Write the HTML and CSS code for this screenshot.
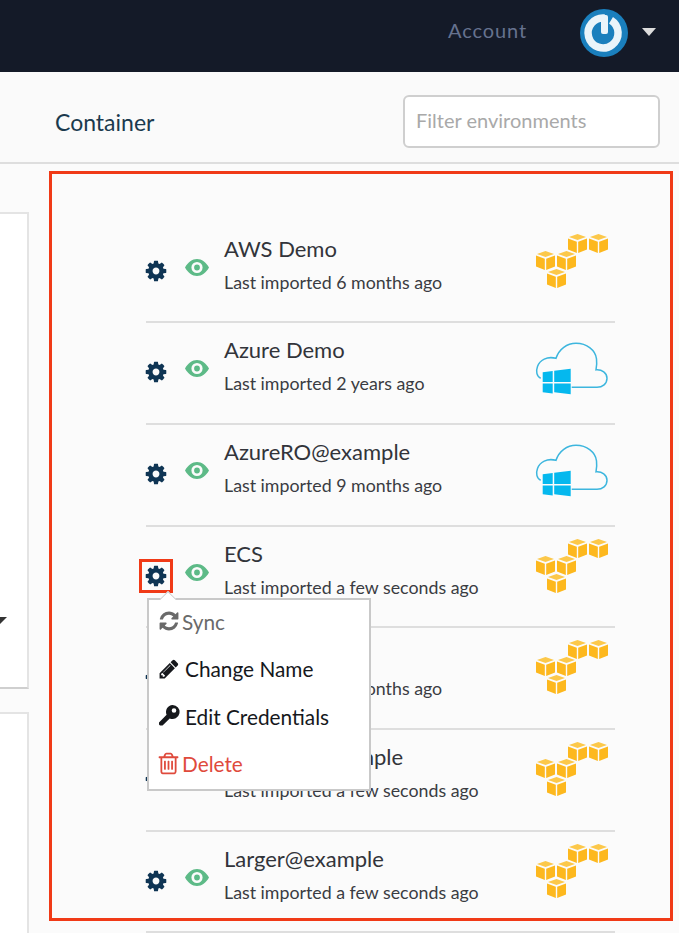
FILE: index.html
```html
<!DOCTYPE html>
<html lang="en">
<head>
<meta charset="utf-8">
<title>Environments</title>
<link rel="stylesheet" href="styles.css">
</head>
<body>
<svg class="defs" width="0" height="0" aria-hidden="true">
  <symbol id="cog" viewBox="0 0 1792 1792"><path d="M1152 896q0-106-75-181t-181-75-181 75-75 181 75 181 181 75 181-75 75-181zm512-109v222q0 12-8 23t-20 13l-185 28q-19 54-39 91 35 50 107 138 10 12 10 25t-9 23q-27 37-99 108t-94 71q-12 0-26-9l-138-108q-44 23-91 38-16 136-29 186-7 28-36 28h-222q-14 0-24.500-8.500t-11.500-21.500l-28-184q-49-16-90-37l-141 107q-10 9-25 9-14 0-25-11-126-114-165-168-7-10-7-23 0-12 8-23 15-21 51-66.500t54-70.500q-27-50-41-99l-183-27q-13-2-21-12.500t-8-23.500v-222q0-12 8-23t19-13l186-28q14-46 39-92-40-57-107-138-10-12-10-24 0-10 9-23 26-36 98.500-107.500t94.500-71.500q13 0 26 10l138 107q44-23 91-38 16-136 29-186 7-28 36-28h222q14 0 24.500 8.500t11.500 21.500l28 184q49 16 90 37l142-107q9-9 24-9 13 0 25 10 129 119 165 170 7 8 7 22 0 12-8 23-15 21-51 66.500t-54 70.500q26 50 41 98l183 28q13 2 21 12.500t8 23.500z"/></symbol>
  <symbol id="eye" viewBox="0 0 24 17"><path fill-rule="evenodd" d="M0 8.500C3 3.200 7.200 0 12 0s9 3.200 12 8.500C21 13.800 16.800 17 12 17S3 13.800 0 8.500zM12 2.900a5.600 5.600 0 1 0 0 11.200 5.600 5.600 0 0 0 0-11.200zM12 5.600a2.900 2.900 0 1 1 0 5.800 2.900 2.900 0 0 1 0-5.800z"/></symbol>
  <symbol id="cube" viewBox="0 0 19 19">
    <polygon points="9.500,0 18,3 9.500,6 1,3" fill="#fcc84a"/>
    <polygon points="0,4.500 8.800,7.700 8.800,19 0,15.500" fill="#fdb81e"/>
    <polygon points="19,4.500 10.200,7.700 10.200,19 19,15.500" fill="#fdb81e"/>
  </symbol>
  <symbol id="aws" viewBox="0 0 74 56">
    <use href="#cube" x="33" y="0" width="19" height="19"/>
    <use href="#cube" x="54" y="0" width="19" height="19"/>
    <use href="#cube" x="1" y="17" width="19" height="19"/>
    <use href="#cube" x="22" y="17" width="19" height="19"/>
    <use href="#cube" x="12" y="35" width="19" height="19"/>
  </symbol>
  <symbol id="azure" viewBox="0 0 74 56">
    <path d="M5.700 38.300C1.500 36.500 .8 31 2.500 26.500 4.800 20 12 16 21 18.300 24 9 32 3.300 41 3.300c11 0 19.500 7 20.500 15.500.4 3 .2 7-.5 11 6-.5 11 3 11 8.500 0 5.500-4.500 9-10 9H36.700" fill="none" stroke="#3db6de" stroke-width="1.500"/>
    <path d="M7.700 32.300l10-1.300v11H7.700zM19.200 30.800l16.500-2.100v13.300H19.200zM7.700 43.500h10v10l-10-1.200zM19.200 43.500h16.500v10.800l-16.500-2z" fill="#05b8ee"/>
  </symbol>
</svg>

<header class="topbar">
  <a class="account">Account</a>
  <span class="avatar">
    <svg viewBox="0 0 48 48" width="48" height="48" aria-hidden="true">
      <circle cx="24" cy="24" r="24" fill="#1a7fbd"/>
      <path d="M31 11.200A15 15 0 1 1 24.500 9" fill="none" stroke="#eaf4fa" stroke-width="7.500"/>
      <rect x="21" y="6" width="7" height="19" rx="2" fill="#eaf4fa"/>
    </svg>
  </span>
  <span class="caret"></span>
</header>

<section class="toolbar">
  <h2 class="tab">Container</h2>
  <input class="filter" type="text" placeholder="Filter environments">
</section>

<div class="content">
  <aside class="sidebar">
    <div class="card card-tall"><span class="card-caret"></span></div>
    <div class="card card-low"></div>
  </aside>

  <main class="main">
    <ul class="envs">
      <li class="env">
        <span class="gear-wrap"><svg class="gear"><use href="#cog"/></svg></span>
        <svg class="eye"><use href="#eye"/></svg>
        <div class="env-text"><div class="env-name">AWS Demo</div><div class="env-sub">Last imported 6 months ago</div></div>
        <svg class="provider"><use href="#aws"/></svg>
      </li>
      <li class="env">
        <span class="gear-wrap"><svg class="gear"><use href="#cog"/></svg></span>
        <svg class="eye"><use href="#eye"/></svg>
        <div class="env-text"><div class="env-name">Azure Demo</div><div class="env-sub">Last imported 2 years ago</div></div>
        <svg class="provider provider-azure"><use href="#azure"/></svg>
      </li>
      <li class="env">
        <span class="gear-wrap"><svg class="gear"><use href="#cog"/></svg></span>
        <svg class="eye"><use href="#eye"/></svg>
        <div class="env-text"><div class="env-name">AzureRO@example</div><div class="env-sub">Last imported 9 months ago</div></div>
        <svg class="provider provider-azure"><use href="#azure"/></svg>
      </li>
      <li class="env">
        <span class="gear-wrap gear-active"><svg class="gear"><use href="#cog"/></svg></span>
        <svg class="eye"><use href="#eye"/></svg>
        <div class="env-text"><div class="env-name">ECS</div><div class="env-sub">Last imported a few seconds ago</div></div>
        <svg class="provider"><use href="#aws"/></svg>
        <div class="menu">
          <span class="menu-arrow"></span>
          <div class="menu-item muted"><svg class="menu-icon" viewBox="0 0 1792 1792"><path d="M1639 1056q0 5-1 7-64 268-268 434.500t-478 166.500q-146 0-282.500-55t-243.500-157l-129 129q-19 19-45 19t-45-19-19-45v-448q0-26 19-45t45-19h448q26 0 45 19t19 45-19 45l-137 137q71 66 161 102t187 36q134 0 250-65t186-179q11-17 53-117 8-23 30-23h192q13 0 22.500 9.500t9.500 22.500zm25-800v448q0 26-19 45t-45 19h-448q-26 0-45-19t-19-45 19-45l138-138q-148-137-349-137-134 0-250 65t-186 179q-11 17-53 117-8 23-30 23h-199q-13 0-22.500-9.500t-9.500-22.500v-7q65-268 270-434.500t480-166.500q146 0 284 55.500t245 156.500l130-129q19-19 45-19t45 19 19 45z"/></svg>Sync</div>
          <div class="menu-item"><svg class="menu-icon" viewBox="0 0 1792 1792"><path d="M491 1536l91-91-235-235-91 91v107h128v128h107zm523-928q0-22-22-22-10 0-17 7l-542 542q-7 7-7 17 0 22 22 22 10 0 17-7l542-542q7-7 7-17zm-54-192l416 416-832 832h-416v-416zm683 96q0 53-37 90l-166 166-416-416 166-165q36-38 90-38 53 0 91 38l235 234q37 39 37 91z"/></svg>Change Name</div>
          <div class="menu-item"><svg class="menu-icon" viewBox="0 0 22 22"><path fill-rule="evenodd" d="M14.500 0a7 7 0 1 1-2.800 13.400L5.600 19.500 4.500 20.600 2 20.600 1 19.600 1 17.400 8.600 9.800A7 7 0 0 1 14.500 0zM16 3.200a2.300 2.300 0 1 0 0 4.600 2.300 2.300 0 0 0 0-4.600z"/></svg>Edit Credentials</div>
          <div class="menu-item danger"><svg class="menu-icon icon-lg" viewBox="0 0 1792 1792"><path d="M704 736v576q0 14-9 23t-23 9h-64q-14 0-23-9t-9-23v-576q0-14 9-23t23-9h64q14 0 23 9t9 23zm256 0v576q0 14-9 23t-23 9h-64q-14 0-23-9t-9-23v-576q0-14 9-23t23-9h64q14 0 23 9t9 23zm256 0v576q0 14-9 23t-23 9h-64q-14 0-23-9t-9-23v-576q0-14 9-23t23-9h64q14 0 23 9t9 23zm128 724v-948h-896v948q0 22 7 40.500t14.500 27 10.500 8.500h832q3 0 10.500-8.500t14.500-27 7-40.500zm-672-1076h448l-48-117q-7-9-17-11h-317q-10 2-17 11zm928 32v64q0 14-9 23t-23 9h-96v948q0 83-47 143.500t-113 60.500h-832q-66 0-113-58.500t-47-141.500v-952h-96q-14 0-23-9t-9-23v-64q0-14 9-23t23-9h309l70-167q15-37 54-63t79-26h320q40 0 79 26t54 63l70 167h309q14 0 23 9t9 23z"/></svg>Delete</div>
        </div>
      </li>
      <li class="env">
        <span class="gear-wrap"><svg class="gear"><use href="#cog"/></svg></span>
        <svg class="eye"><use href="#eye"/></svg>
        <div class="env-text"><div class="env-name">EKS</div><div class="env-sub">Last imported 6 months ago</div></div>
        <svg class="provider"><use href="#aws"/></svg>
      </li>
      <li class="env">
        <span class="gear-wrap"><svg class="gear"><use href="#cog"/></svg></span>
        <svg class="eye"><use href="#eye"/></svg>
        <div class="env-text"><div class="env-name">Smallest@example</div><div class="env-sub">Last imported a few seconds ago</div></div>
        <svg class="provider"><use href="#aws"/></svg>
      </li>
      <li class="env">
        <span class="gear-wrap"><svg class="gear"><use href="#cog"/></svg></span>
        <svg class="eye"><use href="#eye"/></svg>
        <div class="env-text"><div class="env-name">Larger@example</div><div class="env-sub">Last imported a few seconds ago</div></div>
        <svg class="provider"><use href="#aws"/></svg>
      </li>
    </ul>
    <div class="annotation"></div>
  </main>
</div>
</body>
</html>
```
FILE: styles.css
```css
* { box-sizing: border-box; }
html, body { margin: 0; padding: 0; height: 933px; overflow: hidden; }
body { background: #fbfbfb; font-family: Lato, "Open Sans", sans-serif; color: #32343a; }
.defs { position: absolute; }

.topbar { height: 72px; background: #141a28; display: flex; align-items: center; padding: 0 24px 6px 448px; }
.account { font-size: 20px; letter-spacing: .9px; color: #66728f; margin-bottom: 6px; }
.avatar { display: block; width: 48px; height: 48px; margin-left: 53px; }
.caret { width: 0; height: 0; margin-left: 14px; margin-bottom: 3px; border: 7.500px solid transparent; border-top: 8px solid #dcdcdc; border-bottom: 0; }

.toolbar { height: 92px; border-bottom: 2px solid #dedede; background: #fafafa; display: flex; align-items: flex-start; justify-content: space-between; padding: 23px 19px 0 55px; }
.tab { margin: 13px 0 0; font-size: 23px; font-weight: 400; line-height: 28px; color: #1b3a4e; }
.filter { width: 257px; height: 53px; border: 2px solid #cfcfcf; border-radius: 6px; background: #fff; padding: 0 11px 4px; font: 20px Lato, sans-serif; outline: none; }
.filter::placeholder { color: #a9a9a9; opacity: 1; }

.content { display: flex; }
.sidebar { width: 29px; flex: none; padding-top: 48px; display: flex; flex-direction: column; gap: 23px; }
.card { background: #fff; border: 2px solid #e4e4e4; border-left: 0; position: relative; }
.card-tall { height: 477px; border-bottom-color: #cfcfcf; }
.card-low { height: 240px; }
.card-caret { position: absolute; left: -7px; top: 403px; border: 7px solid transparent; border-top: 7px solid #333; border-bottom: 0; }

.main { position: relative; flex: none; width: 650px; padding: 57.500px 0 0 117px; }
.annotation { position: absolute; left: 20px; top: 7px; width: 624px; height: 750px; border: 3px solid #f03a17; pointer-events: none; }
.envs { list-style: none; margin: 0; padding: 0; width: 469px; }
.env { position: relative; height: 101.700px; border-bottom: 2px solid #dedede; display: flex; align-items: flex-start; }
.gear-wrap { flex: none; width: 34px; height: 34px; margin: 32px 0 0 -7px; display: flex; align-items: center; justify-content: center; }
.gear-active { outline: 3px solid #f03a17; outline-offset: -3px; }
.gear { width: 24px; height: 24px; fill: #0f3554; }
.eye { flex: none; width: 24px; height: 17px; fill: #5dba87; margin: 37px 0 0 12px; }
.env-text { flex: none; width: 310px; margin: 12px 0 0 15px; }
.env-name { font-size: 22px; line-height: 30px; color: #32343a; }
.env-sub { font-size: 17.800px; line-height: 24px; margin-top: 6px; color: #3a3c42; white-space: nowrap; }
.provider { flex: none; width: 74px; height: 56px; margin: 12px 0 0 1px; }
.provider-azure { margin-top: 17px; }

.menu { position: absolute; left: 1px; top: 71.500px; width: 224px; height: 193px; z-index: 2; background: #fff; border: 2px solid #c9c9c9; padding: 0 9px; display: flex; flex-direction: column; }
.menu-arrow { position: absolute; left: 12px; top: -8px; width: 14px; height: 14px; background: #fff; border-top: 1px solid #c9c9c9; border-right: 1px solid #c9c9c9; transform: rotate(-45deg) scale(.8); }
.menu-item { flex: none; height: 47.500px; padding-bottom: 5px; display: flex; align-items: center; gap: 5px; font-size: 20.800px; color: #16181c; white-space: nowrap; }
.menu-icon { width: 22px; height: 22px; fill: currentColor; flex: none; }
.icon-lg { width: 25px; height: 25px; margin: 0 -1px 0 -2px; }
.muted { color: #6a6a6a; gap: 2px; }
.danger { color: #df4a3c; gap: 2px; }
```
